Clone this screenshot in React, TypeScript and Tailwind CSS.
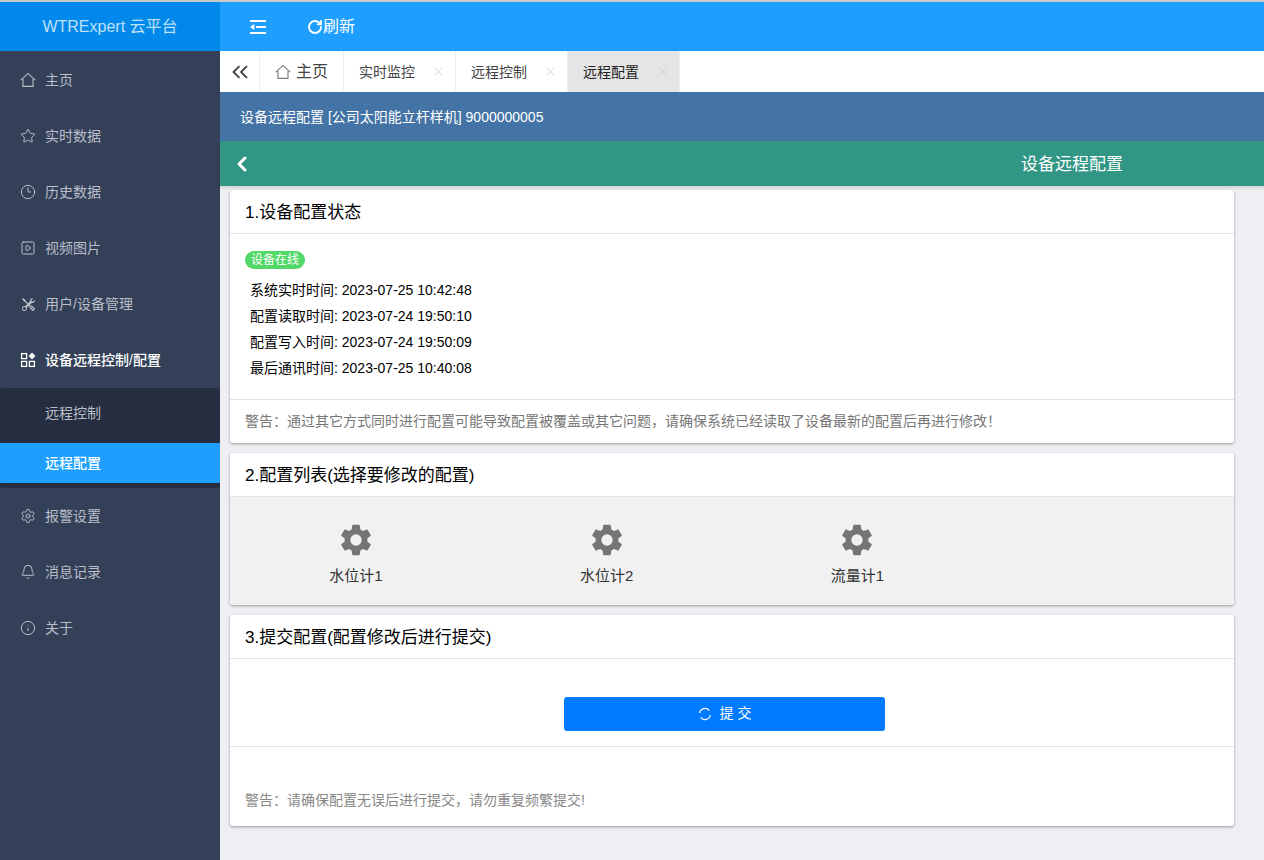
import React from "react";
import {
    ChevronLeft,
    ChevronsLeft,
    Clock3,
    Bell,
    Info,
    PlaySquare,
    RotateCw,
    Settings,
    Star,
    X,
} from "lucide-react";
import { BsTools } from "react-icons/bs";

const FONT = "font-['Liberation_Sans','Noto_Sans_CJK_SC',sans-serif]";

// layui style house, thin outline with a wide roof
const HomeIcon = ({ size = 16, className = "" }: { size?: number; className?: string }) => (
    <svg
        viewBox="0 0 16 16"
        width={size}
        height={size}
        fill="none"
        stroke="currentColor"
        strokeWidth={1.1}
        className={className}
    >
        <path d="M.8 8.2 8 1.4l7.2 6.8" />
        <path d="M3 7v7.4h10V7" />
    </svg>
);

const ToolsIcon = ({ size = 16, className = "" }: { size?: number; className?: string }) => (
    <BsTools size={size - 3} className={className} />
);

const GridIcon = ({ size = 16, className = "" }: { size?: number; className?: string }) => (
    <svg viewBox="0 0 16 16" width={size} height={size} className={className}>
        <g fill="none" stroke="currentColor" strokeWidth={1.3}>
            <rect x="1.6" y="1.6" width="5" height="5" />
            <rect x="1.6" y="9.4" width="5" height="5" />
            <rect x="9.4" y="9.4" width="5" height="5" />
        </g>
        <path d="M12 .6 15.4 4 12 7.4 8.6 4z" fill="currentColor" />
    </svg>
);

const topMenu = [
    { label: "主页", Icon: HomeIcon },
    { label: "实时数据", Icon: Star },
    { label: "历史数据", Icon: Clock3 },
    { label: "视频图片", Icon: PlaySquare },
    { label: "用户/设备管理", Icon: ToolsIcon },
];

const bottomMenu = [
    { label: "报警设置", Icon: Settings },
    { label: "消息记录", Icon: Bell },
    { label: "关于", Icon: Info },
];

const MenuItem = ({ label, Icon, active = false }) => (
    <div
        className={`flex h-14 items-center pl-5 text-sm ${
            active ? "font-medium text-white" : "text-[#b9bec8]"
        }`}
    >
        <span className="mr-[9px] flex w-4 items-center justify-center">
            <Icon size={16} strokeWidth={1.5} />
        </span>
        <span>{label}</span>
    </div>
);

const Tab = ({ label, active = false }) => (
    <div
        className={`flex h-full w-[112px] items-center border-r border-[#f0f0f0] pl-[15px] text-sm ${
            active ? "bg-[#e5e5e5] text-[#222]" : "text-[#444]"
        }`}
    >
        <span>{label}</span>
        <X size={15} strokeWidth={1} className="ml-4 text-[#c4c4c4]" />
    </div>
);

const Card = ({ title, className = "", children }) => (
    <section
        className={`rounded-[3px] bg-white shadow-[0_1px_3px_rgba(0,0,0,0.35)] ${className}`}
    >
        <div className="flex h-[44px] items-center border-b border-[#e4e4e4] pl-[15px] pt-[2px] text-[17px] text-black">
            {title}
        </div>
        {children}
    </section>
);

const Gear = () => (
    <svg viewBox="0 0 24 24" className="h-[38px] w-[38px] fill-[#757575]">
        <path d="M19.14 12.94c.04-.3.06-.61.06-.94 0-.32-.02-.64-.07-.94l2.03-1.58a.49.49 0 0 0 .12-.61l-1.92-3.32a.488.488 0 0 0-.59-.22l-2.39.96c-.5-.38-1.03-.7-1.62-.94l-.36-2.54a.484.484 0 0 0-.48-.41h-3.84c-.24 0-.43.17-.47.41l-.36 2.54c-.59.24-1.13.57-1.62.94l-2.39-.96c-.22-.08-.47 0-.59.22L2.74 8.87c-.12.21-.08.47.12.61l2.03 1.58c-.05.3-.09.63-.09.94s.02.64.07.94l-2.03 1.58a.49.49 0 0 0-.12.61l1.92 3.32c.12.22.37.29.59.22l2.39-.96c.5.38 1.03.7 1.62.94l.36 2.54c.05.24.24.41.48.41h3.84c.24 0 .44-.17.47-.41l.36-2.54c.59-.24 1.13-.56 1.62-.94l2.39.96c.22.08.47 0 .59-.22l1.92-3.32c.12-.22.07-.47-.12-.61l-2.01-1.58zM12 15.6A3.6 3.6 0 1 1 12 8.4a3.6 3.6 0 0 1 0 7.2z" />
    </svg>
);

const ConfigItem = ({ label }) => (
    <div className="flex w-[250.75px] flex-col items-center rounded-[3px] border-r border-[#eeeeee] pl-[2px] pt-[24px]">
        <Gear />
        <div className="mt-[6px] text-[15px] text-[#333]">{label}</div>
    </div>
);

export default function App() {
    return (
        <div
            className={`${FONT} flex h-[860px] w-[1264px] overflow-hidden border-t-2 border-[#c8c8c8] bg-[#eeeef3]`}
        >
            <aside className="flex w-[220px] shrink-0 flex-col bg-[#344058]">
                <div className="flex h-[49px] shrink-0 items-center justify-center bg-[#0088ea] text-base text-[#bfe1fa]">
                    WTRExpert 云平台
                </div>
                <nav className="pt-px">
                    {topMenu.map((item) => (
                        <MenuItem key={item.label} {...item} />
                    ))}
                    <MenuItem label="设备远程控制/配置" Icon={GridIcon} active />
                    <div className="rounded-[3px] bg-[#252e40] pb-[5px] text-sm">
                        <div className="flex h-[50px] items-center pl-[45px] text-[#b9bec8]">
                            远程控制
                        </div>
                        <div className="mt-[5px] flex h-10 items-center bg-[#1e9fff] pl-[45px] font-medium text-white">
                            远程配置
                        </div>
                    </div>
                    {bottomMenu.map((item) => (
                        <MenuItem key={item.label} {...item} />
                    ))}
                </nav>
            </aside>

            <main className="flex min-w-0 flex-1 flex-col">
                <header className="flex h-[49px] shrink-0 items-center bg-[#1e9fff] pl-[30px] text-white">
                    <svg viewBox="0 0 16 14" className="h-[14px] w-4 fill-white">
                        <rect x="0" y="0" width="16" height="2" />
                        <rect x="0" y="12" width="16" height="2" />
                        <rect x="6" y="6" width="10" height="2" />
                        <path d="M0 7 4.4 4v6z" />
                    </svg>
                    <RotateCw size={16} strokeWidth={2.8} className="ml-[41px]" />
                    <span className="text-base">刷新</span>
                </header>

                <div className="flex h-[41px] shrink-0 items-stretch bg-white">
                    <div className="flex w-10 items-center justify-center border-r border-[#f0f0f0] text-[#444]">
                        <ChevronsLeft size={26} strokeWidth={1.7} />
                    </div>
                    <div className="flex w-[84px] items-center border-r border-[#f0f0f0] pl-[15px] text-base text-[#444]">
                        <HomeIcon size={16} className="mr-[5px] text-[#777]" />
                        主页
                    </div>
                    <Tab label="实时监控" />
                    <Tab label="远程控制" />
                    <Tab label="远程配置" active />
                </div>

                <div className="flex h-[49px] shrink-0 items-center bg-[#4474a6] pl-5 text-sm text-white">
                    设备远程配置 [公司太阳能立杆样机] 9000000005
                </div>

                <div className="relative flex h-[45px] shrink-0 items-center bg-[#329685] shadow-[0_2px_3px_rgba(0,0,0,0.12)]">
                    <ChevronLeft
                        size={24}
                        strokeWidth={3}
                        className="ml-[10px] text-white"
                    />
                    <div className="absolute left-[801px] mt-[2px] text-[17px] text-white">
                        设备远程配置
                    </div>
                </div>

                <div className="flex flex-col gap-[10px] pl-[10px] pr-[30px] pt-1">
                    <Card title="1.设备配置状态" className="h-[253px]">
                        <div className="h-[166px] border-b border-[#e4e4e4] pl-[15px] pt-[17px]">
                            <span className="flex h-[18px] w-[60px] items-center justify-center rounded-full bg-[#52d869] text-xs text-white">
                                设备在线
                            </span>
                            <div className="pl-[5px] pt-[8px] text-sm leading-[26px] text-black">
                                <div>系统实时时间: 2023-07-25 10:42:48</div>
                                <div>配置读取时间: 2023-07-24 19:50:10</div>
                                <div>配置写入时间: 2023-07-24 19:50:09</div>
                                <div>最后通讯时间: 2023-07-25 10:40:08</div>
                            </div>
                        </div>
                        <div className="pl-[15px] pt-[11px] text-sm text-[#777]">
                            警告：通过其它方式同时进行配置可能导致配置被覆盖或其它问题，请确保系统已经读取了设备最新的配置后再进行修改！
                        </div>
                    </Card>

                    <Card title="2.配置列表(选择要修改的配置)" className="h-[152px]">
                        <div className="flex h-[108px] rounded-b-[3px] bg-[#f1f1f1]">
                            <ConfigItem label="水位计1" />
                            <ConfigItem label="水位计2" />
                            <ConfigItem label="流量计1" />
                        </div>
                    </Card>

                    <Card title="3.提交配置(配置修改后进行提交)" className="h-[211px]">
                        <div className="flex h-[88px] items-start justify-center border-b border-[#e4e4e4] pr-[15px] pt-[38px]">
                            <button className="flex h-[34px] w-[321px] items-center justify-center rounded-[3px] bg-[#007bff] pb-[3px] text-sm text-white">
                                <svg
                                    viewBox="0 0 14 14"
                                    className="mr-[8px] mt-[3px] h-[14px] w-[14px]"
                                    fill="none"
                                    stroke="currentColor"
                                    strokeWidth={1.2}
                                >
                                    <path d="M1.6 6A5.5 5.5 0 0 1 11.4 3.6" />
                                    <path d="M12.4 8A5.5 5.5 0 0 1 2.6 10.4" />
                                </svg>
                                提 交
                            </button>
                        </div>
                        <div className="pl-[15px] pt-[43px] text-sm text-[#888]">
                            警告：请确保配置无误后进行提交，请勿重复频繁提交!
                        </div>
                    </Card>
                </div>
            </main>
        </div>
    );
}
